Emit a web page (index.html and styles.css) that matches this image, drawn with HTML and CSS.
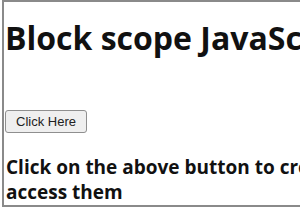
FILE: index.html
```html
<!DOCTYPE html>
<html>
<head>
  <meta charset="UTF-8">
  <title>Block scope JavaScript</title>
  <link rel="stylesheet" href="styles.css">
</head>
<body>
  <div class="frame">
    <h1>Block scope JavaScript</h1>
    <button class="btn" id="btn">Click Here</button>
    <h3 class="result">Click on the above button to create variables and access them</h3>
  </div>
</body>
</html>
```

FILE: styles.css
```css
html, body {
  margin: 0;
  overflow: hidden;
  background: #ffffff;
}

.frame {
  width: 560px;
  height: 207px;
  box-sizing: border-box;
  margin-left: 2px;
  border: 2px solid #8a8a8a;
  border-right: none;
  padding: 0 6px 0 1px;
  font-family: "Open Sans", "Noto Sans", sans-serif;
  color: #111111;
}

h1 {
  font-size: 32px;
  font-weight: 700;
  line-height: 40px;
  margin: 16px 0 52px;
  white-space: nowrap;
}

.btn {
  display: block;
  font-family: "Liberation Sans", Arial, sans-serif;
  font-size: 13px;
  color: #222222;
  padding: 3px 10px;
  background: #efefef;
  border: 1px solid #8f8f8f;
  border-radius: 3px;
}

.result {
  font-size: 19px;
  font-weight: 700;
  line-height: 25px;
  margin: 22px 0 0 1px;
  width: 500px;
}
```
